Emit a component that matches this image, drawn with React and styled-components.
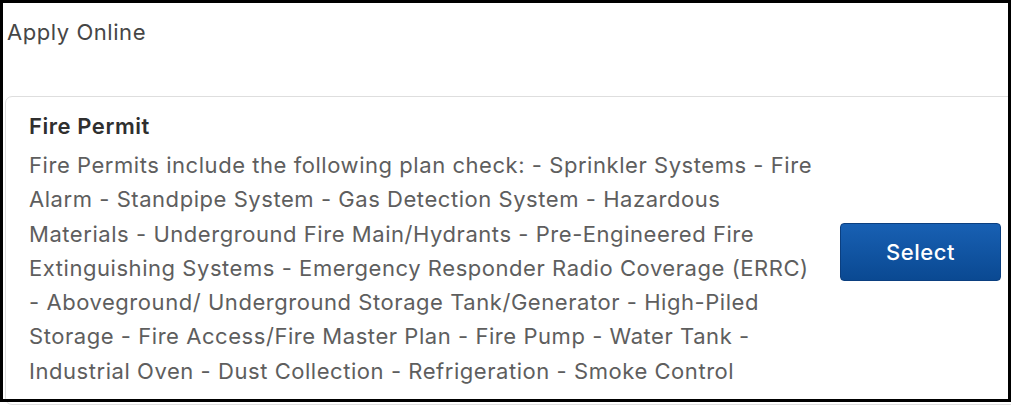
import React from 'react';
import styled, { createGlobalStyle } from 'styled-components';

const GlobalStyle = createGlobalStyle`
  html, body {
    margin: 0;
    padding: 0;
    background: #ffffff;
  }
  body {
    font-family: Inter, "Noto Sans", Arial, sans-serif;
    letter-spacing: 0.55px;
  }
`;

const Page = styled.div`
  position: relative;
  width: 1011px;
  height: 407px;
  overflow: hidden;
  background: #ffffff;
`;

// black outline drawn over the whole panel
const Frame = styled.div`
  position: absolute;
  top: 0;
  left: 0;
  width: 1011px;
  height: 402px;
  box-sizing: border-box;
  border: 3px solid #000;
  pointer-events: none;
`;

const Heading = styled.h2`
  margin: 0;
  padding: 20px 0 0 7px;
  font-size: 22px;
  font-weight: 400;
  line-height: 24px;
  color: #464646;
`;

const Card = styled.div`
  display: flex;
  align-items: center;
  gap: 21px;
  width: 1040px;
  margin: 52px 0 0 5px;
  padding: 12px 0 16px 23px;
  border: 1px solid #dedede;
  border-radius: 7px;
  box-sizing: border-box;
`;

const Info = styled.div`
  width: 790px;
  flex-shrink: 0;
`;

const Title = styled.div`
  margin-bottom: 5px;
  font-size: 22px;
  font-weight: 600;
  line-height: 34px;
  color: #2f2f2f;
`;

const Description = styled.p`
  margin: 0;
  font-size: 22px;
  line-height: 34.3px;
  color: #5e5e5e;
`;

const SelectButton = styled.button`
  width: 161px;
  height: 58px;
  margin-top: 6px;
  border: 1px solid #0b3f80;
  border-radius: 4px;
  background: linear-gradient(#1860b3, #0a4992);
  color: #ffffff;
  font-family: inherit;
  font-size: 22px;
  font-weight: 500;
  letter-spacing: 0.5px;
  cursor: pointer;
`;

export default function App() {
  return (
    <Page>
      <GlobalStyle />
      <Heading>Apply Online</Heading>
      <Card>
        <Info>
          <Title>Fire Permit</Title>
          <Description>
            Fire Permits include the following plan check: - Sprinkler Systems - Fire Alarm -
            Standpipe System - Gas Detection System - Hazardous Materials - Underground Fire
            Main/Hydrants - Pre-Engineered Fire Extinguishing Systems - Emergency Responder Radio
            Coverage (ERRC) - Aboveground/ Underground Storage Tank/Generator - High-Piled Storage -
            Fire Access/Fire Master Plan - Fire Pump - Water Tank - Industrial Oven - Dust Collection -
            Refrigeration - Smoke Control
          </Description>
        </Info>
        <SelectButton>Select</SelectButton>
      </Card>
      <Frame />
    </Page>
  );
}
